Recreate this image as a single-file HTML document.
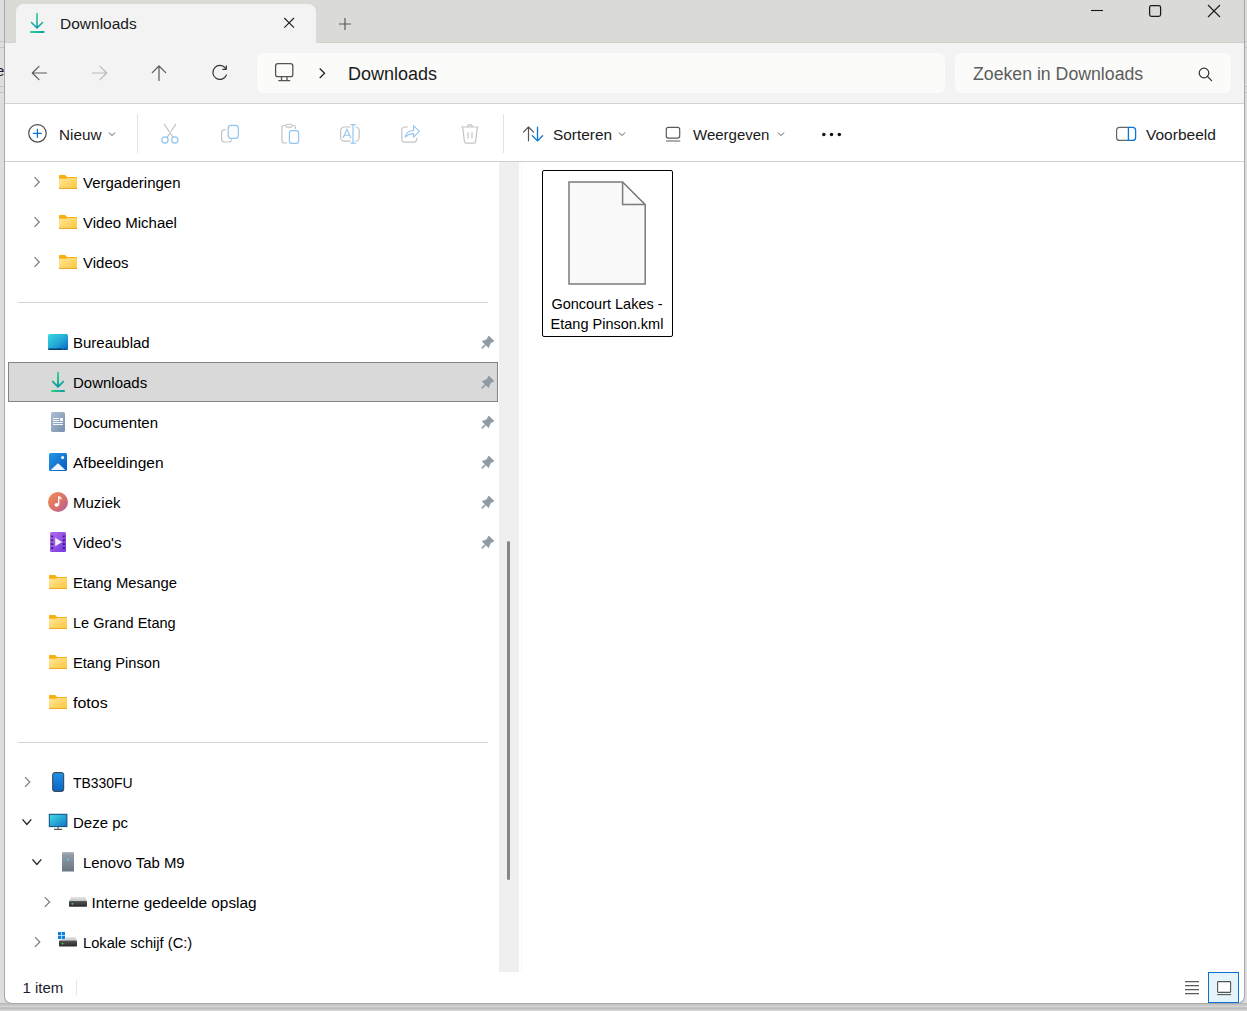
<!DOCTYPE html>
<html><head><meta charset="utf-8">
<style>
*{margin:0;padding:0;box-sizing:border-box}
html,body{width:1247px;height:1011px;overflow:hidden;background:#d4d4d4;font-family:"Liberation Sans",sans-serif;color:#1a1a1a}
.a{position:absolute}
.t{position:absolute;font-size:15px;line-height:20px;white-space:nowrap}
svg{position:absolute;overflow:visible}
</style></head><body>
<!-- left strip (another window behind) -->
<div class="a" style="left:0;top:0;width:4px;height:1011px;background:#dedede"></div>
<div class="a" style="left:0;top:41px;width:4px;height:1px;background:#c4c4c4"></div>
<div class="a" style="left:0;top:47px;width:4px;height:1px;background:#c4c4c4"></div>
<div class="a" style="left:0;top:86px;width:4px;height:1px;background:#c4c4c4"></div>
<div class="a" style="left:0;top:92px;width:4px;height:1px;background:#c4c4c4"></div>
<div class="t" style="left:-4px;top:61px;font-size:15px;color:#1a1a2a">e</div>
<!-- right strip -->
<div class="a" style="left:1245px;top:0;width:2px;height:1011px;background:#dcdcdc"></div>
<div class="a" style="left:1245px;top:41px;width:2px;height:1px;background:#c4c4c4"></div>
<div class="a" style="left:1245px;top:47px;width:2px;height:1px;background:#c4c4c4"></div>
<div class="a" style="left:1245px;top:86px;width:2px;height:1px;background:#c4c4c4"></div>
<div class="a" style="left:1245px;top:92px;width:2px;height:1px;background:#c4c4c4"></div>
<!-- bottom strip -->
<div class="a" style="left:0;top:1003px;width:1247px;height:8px;background:linear-gradient(#b4b4b4 0px,#c6c6c6 2px,#d2d2d2 3.5px,#c4c4c4 4.5px,#bdbdbd 5.5px,#d4d4d4 7px,#d8d8d8 8px)"></div>

<!-- window -->
<div id="win" class="a" style="left:4px;top:0;width:1241px;height:1004px;border:1px solid #a8a8a8;border-top:none;border-radius:0 0 8px 8px;background:#fff;overflow:hidden">
</div>

<!-- title bar -->
<div class="a" style="left:5px;top:0;width:1239px;height:43px;background:#dadbd7"></div>
<!-- row 2 bg -->
<div class="a" style="left:5px;top:43px;width:1239px;height:60px;background:#f3f3f3"></div>
<div class="a" style="left:316px;top:0;width:928px;height:43px;background:#dadbd7;border-bottom-left-radius:5px;border-bottom:1px solid #cfcfcc"></div>
<!-- tab -->
<div class="a" style="left:16px;top:3.5px;width:300px;height:40.5px;background:#f3f3f3;border-radius:8px 8px 0 0"></div>
<div class="a" style="left:5px;top:0;width:11px;height:43px;background:#dadbd7;border-bottom-right-radius:5px;border-bottom:1px solid #cfcfcc"></div>

<div class="t" style="left:60px;top:14px;font-size:15.5px">Downloads</div>

<!-- address box -->
<div class="a" style="left:257px;top:53px;width:688px;height:40px;background:#fbfbfa;border-radius:6px"></div>
<div class="t" style="left:348px;top:64px;font-size:18px">Downloads</div>
<!-- search box -->
<div class="a" style="left:955px;top:53px;width:276px;height:40px;background:#fbfbfa;border-radius:6px"></div>
<div class="t" style="left:973px;top:64px;font-size:18px;color:#5d5d5d;transform:scaleX(0.983);transform-origin:0 0">Zoeken in Downloads</div>

<!-- lines -->
<div class="a" style="left:5px;top:103px;width:1239px;height:1px;background:#d3d3d1"></div>
<div class="a" style="left:5px;top:161px;width:1239px;height:1px;background:#d0d0ce"></div>


<!-- ICONS TOP -->
<svg style="left:0;top:0" width="1247" height="110">
 <defs>
  <linearGradient id="gdl" x1="0" y1="0" x2="0" y2="1"><stop offset="0" stop-color="#2fd18a"/><stop offset="1" stop-color="#0c9ea6"/></linearGradient>
  <linearGradient id="gdl2" x1="0" y1="0" x2="1" y2="0"><stop offset="0" stop-color="#2fd18a"/><stop offset="1" stop-color="#0c9ea6"/></linearGradient>
 </defs>
 <!-- tab download icon -->
 <path d="M37 13.5V28M31.5 22.5L37 28L42.5 22.5" fill="none" stroke="url(#gdl)" stroke-width="1.6" stroke-linecap="round" stroke-linejoin="round"/>
 <rect x="30" y="31" width="14.5" height="2" rx="0.8" fill="url(#gdl2)"/>
 <!-- tab close -->
 <path d="M284.3 18L294 27.7M294 18L284.3 27.7" stroke="#1f1f1f" stroke-width="1.1"/>
 <!-- plus -->
 <path d="M345 18V30M339 24H351" stroke="#5a5a5a" stroke-width="1.2"/>
 <!-- window controls -->
 <path d="M1091 10.5H1103" stroke="#1a1a1a" stroke-width="1.1"/>
 <rect x="1149.6" y="5.6" width="11" height="10.8" rx="1.8" fill="none" stroke="#1a1a1a" stroke-width="1.25"/>
 <path d="M1208 5L1220 17M1220 5L1208 17" stroke="#1a1a1a" stroke-width="1.1"/>
 <!-- back -->
 <path d="M46.5 73H32.5M39 66.3L32.3 73L39 79.7" fill="none" stroke="#5c5c5c" stroke-width="1.2" stroke-linecap="round" stroke-linejoin="round"/>
 <!-- forward -->
 <path d="M92.5 73H106.5M100 66.3L106.7 73L100 79.7" fill="none" stroke="#b9b9b9" stroke-width="1.2" stroke-linecap="round" stroke-linejoin="round"/>
 <!-- up -->
 <path d="M159 80.5V66M152.3 72.7L159 66L165.7 72.7" fill="none" stroke="#5a5a5a" stroke-width="1.2" stroke-linecap="round" stroke-linejoin="round"/>
 <!-- refresh -->
 <path d="M225.6 68.4A7 7 0 1 0 226.4 75" fill="none" stroke="#333" stroke-width="1.2" stroke-linecap="round"/>
 <path d="M226.3 65.8V69.3H222.8" fill="none" stroke="#333" stroke-width="1.2" stroke-linecap="round" stroke-linejoin="round"/>
 <!-- monitor -->
 <rect x="275.6" y="63.6" width="17.2" height="13" rx="2.2" fill="none" stroke="#555" stroke-width="1.3"/>
 <path d="M281.5 77V80M287 77V80M278.3 80.7H290.2" fill="none" stroke="#555" stroke-width="1.3"/>
 <!-- breadcrumb chevron -->
 <path d="M319.7 68.5L324.6 73.3L319.7 78" fill="none" stroke="#1f1f1f" stroke-width="1.2"/>
 <!-- search -->
 <circle cx="1204" cy="73" r="4.8" fill="none" stroke="#333" stroke-width="1.2"/>
 <path d="M1207.4 76.4L1211.6 80.6" stroke="#333" stroke-width="1.3" stroke-linecap="round"/>
</svg>

<!-- command bar text -->
<div class="t" style="left:59px;top:125px;font-size:15.3px">Nieuw</div>
<div class="t" style="left:553px;top:125px;font-size:15.4px">Sorteren</div>
<div class="t" style="left:693px;top:125px">Weergeven</div>
<div class="t" style="left:1146px;top:125px;font-size:15.5px">Voorbeeld</div>
<div class="a" style="left:137px;top:114px;width:1px;height:39px;background:#e3e3e3"></div>
<div class="a" style="left:503px;top:114px;width:1px;height:39px;background:#e3e3e3"></div>


<!-- ICONS CMD -->
<svg style="left:0;top:104px" width="1247" height="57" viewBox="0 104 1247 57">
 <circle cx="37.45" cy="133.35" r="8.75" fill="none" stroke="#4a4a4a" stroke-width="1.2"/>
 <path d="M37.4 129.4V137.3M33.4 133.4H41.3" stroke="#0a72d4" stroke-width="1.3" stroke-linecap="round"/>
 <path d="M109 132.6L112 135.6L115 132.6" fill="none" stroke="#555" stroke-width="1"/>
 <!-- scissors -->
 <path d="M164.3 124.3L173 137.2M175.7 124.3L171.2 131.3M169.4 134.2L167 137.4" fill="none" stroke="#bcbcbc" stroke-width="1.1" stroke-linecap="round"/>
 <circle cx="165" cy="140" r="3.1" fill="none" stroke="#93c5ee" stroke-width="1.2"/>
 <circle cx="174.8" cy="140" r="3.1" fill="none" stroke="#93c5ee" stroke-width="1.2"/>
 <!-- copy -->
 <path d="M225.6 129.6H224.6A3 3 0 0 0 221.6 132.6V139A3 3 0 0 0 224.6 142H228.6A3 3 0 0 0 231.6 139.5" fill="none" stroke="#c4c4c4" stroke-width="1.2"/>
 <rect x="228.2" y="125.4" width="10.2" height="13" rx="2.8" fill="#fbfbfb" stroke="#93c5ee" stroke-width="1.2"/>
 <!-- paste -->
 <path d="M295.5 129V127.5A2 2 0 0 0 293.5 125.5H284A2 2 0 0 0 282 127.5V141A2 2 0 0 0 284 143H287" fill="none" stroke="#c4c4c4" stroke-width="1.2"/>
 <rect x="285.8" y="124.3" width="6.5" height="2.8" rx="1.3" fill="#fff" stroke="#c4c4c4" stroke-width="1.1"/>
 <rect x="289.4" y="130.6" width="9.2" height="12.8" rx="2.4" fill="#fff" stroke="#93c5ee" stroke-width="1.2"/>
 <!-- rename -->
 <path d="M350.5 127H344.2A3.6 3.6 0 0 0 340.6 130.6V137.6A3.6 3.6 0 0 0 344.2 141.2H350.5M355.6 127H355.6A3.6 3.6 0 0 1 359.2 130.6V137.6A3.6 3.6 0 0 1 355.6 141.2" fill="none" stroke="#c4c4c4" stroke-width="1.2"/>
 <path d="M343 138L347 129.3L351 138M344.3 135.2H349.7" fill="none" stroke="#93c5ee" stroke-width="1.1"/>
 <path d="M353 124.6V143.2M350.6 124.6H355.8M350.6 143.2H355.8" fill="none" stroke="#93c5ee" stroke-width="1.2"/>
 <!-- share -->
 <path d="M407.8 127H405A3.2 3.2 0 0 0 401.8 130.2V139A3.2 3.2 0 0 0 405 142.2H413.6A3.2 3.2 0 0 0 416.8 139V138" fill="none" stroke="#c4c4c4" stroke-width="1.2"/>
 <path d="M405.3 137.2C406 132.5 409 130.5 413.6 130.5V125.6L419.3 131.4L413.6 137.2V133.6C410 133.6 407.5 134.8 405.3 137.2Z" fill="none" stroke="#93c5ee" stroke-width="1.1" stroke-linejoin="round"/>
 <!-- delete -->
 <path d="M461 127H478.6M467.6 127A2.4 2.4 0 0 1 472.4 127" fill="none" stroke="#c4c4c4" stroke-width="1.2"/>
 <path d="M462.7 127.4L464.4 141.4A2 2 0 0 0 466.4 143.2H473.6A2 2 0 0 0 475.6 141.4L477.3 127.4" fill="none" stroke="#c4c4c4" stroke-width="1.2"/>
 <path d="M468 132.2V138.6M472 132.2V138.6" stroke="#c4c4c4" stroke-width="1.2"/>
 <!-- sort -->
 <path d="M528.5 140.8V127M523.4 132.1L528.5 127L533.6 132.1" fill="none" stroke="#555" stroke-width="1.2" stroke-linecap="round" stroke-linejoin="round"/>
 <path d="M537.5 127.2V140.8M532.4 135.8L537.5 140.9L542.6 135.8" fill="none" stroke="#0a74d6" stroke-width="1.3" stroke-linecap="round" stroke-linejoin="round"/>
 <path d="M619 132.6L622 135.6L625 132.6" fill="none" stroke="#555" stroke-width="1"/>
 <!-- view -->
 <rect x="666.3" y="127.4" width="13.4" height="10.7" rx="2" fill="none" stroke="#5a5a5a" stroke-width="1.2"/>
 <path d="M666 141H680.2" stroke="#777" stroke-width="1.2"/>
 <path d="M778 132.6L781 135.6L784 132.6" fill="none" stroke="#555" stroke-width="1"/>
 <!-- dots -->
 <circle cx="823.8" cy="134.4" r="1.75" fill="#111"/>
 <circle cx="831.5" cy="134.4" r="1.75" fill="#111"/>
 <circle cx="839.3" cy="134.4" r="1.75" fill="#111"/>
 <!-- preview -->
 <path d="M1128.4 127.3H1119.6A3 3 0 0 0 1116.6 130.3V137.4A3 3 0 0 0 1119.6 140.4H1128.4" fill="none" stroke="#666" stroke-width="1.2"/>
 <path d="M1128.4 127.3H1132.6A3 3 0 0 1 1135.6 130.3V137.4A3 3 0 0 1 1132.6 140.4H1128.4Z" fill="none" stroke="#0a74d6" stroke-width="1.3"/>
</svg>

<!-- nav pane -->
<div class="t" style="left:83px;top:173px;font-size:15.4px;color:#000;transform:scaleX(0.974);transform-origin:0 0">Vergaderingen</div>
<div class="t" style="left:83px;top:213px;font-size:15.4px;color:#000;transform:scaleX(0.974);transform-origin:0 0">Video Michael</div>
<div class="t" style="left:83px;top:253px;font-size:15.4px;color:#000;transform:scaleX(0.974);transform-origin:0 0">Videos</div>
<div class="a" style="left:18px;top:302px;width:470px;height:1px;background:#d6d6d6"></div>
<div class="a" style="left:8px;top:362px;width:490px;height:40px;background:#d9d9d9;border:1px solid #838383"></div>
<div class="t" style="left:73px;top:333px;font-size:15.4px;color:#000;transform:scaleX(0.974);transform-origin:0 0">Bureaublad</div>
<div class="t" style="left:73px;top:373px;font-size:15.4px;color:#000;transform:scaleX(0.974);transform-origin:0 0">Downloads</div>
<div class="t" style="left:73px;top:413px;font-size:15.4px;color:#000;transform:scaleX(0.974);transform-origin:0 0">Documenten</div>
<div class="t" style="left:73px;top:453px;font-size:15.4px;color:#000;transform:scaleX(1.0081);transform-origin:0 0">Afbeeldingen</div>
<div class="t" style="left:73px;top:493px;font-size:15.4px;color:#000;transform:scaleX(0.974);transform-origin:0 0">Muziek</div>
<div class="t" style="left:73px;top:533px;font-size:15.4px;color:#000;transform:scaleX(0.974);transform-origin:0 0">Video's</div>
<div class="t" style="left:73px;top:573px;font-size:15.4px;color:#000;transform:scaleX(0.9643);transform-origin:0 0">Etang Mesange</div>
<div class="t" style="left:73px;top:613px;font-size:15.4px;color:#000;transform:scaleX(0.9448);transform-origin:0 0">Le Grand Etang</div>
<div class="t" style="left:73px;top:653px;font-size:15.4px;color:#000;transform:scaleX(0.9516);transform-origin:0 0">Etang Pinson</div>
<div class="t" style="left:73px;top:693px;font-size:15.4px;color:#000;transform:scaleX(1.0373);transform-origin:0 0">fotos</div>
<div class="a" style="left:18px;top:742px;width:470px;height:1px;background:#d6d6d6"></div>
<div class="t" style="left:73px;top:773px;font-size:15.4px;color:#000;transform:scaleX(0.9058);transform-origin:0 0">TB330FU</div>
<div class="t" style="left:73px;top:813px;font-size:15.4px;color:#000;transform:scaleX(0.974);transform-origin:0 0">Deze pc</div>
<div class="t" style="left:82.5px;top:853px;font-size:15.4px;color:#000;transform:scaleX(0.968);transform-origin:0 0">Lenovo Tab M9</div>
<div class="t" style="left:91.5px;top:893px;font-size:15.4px;color:#000;transform:scaleX(1.0);transform-origin:0 0">Interne gedeelde opslag</div>
<div class="t" style="left:82.5px;top:933px;font-size:15.4px;color:#000;transform:scaleX(0.9526);transform-origin:0 0">Lokale schijf (C:)</div>

<!-- scrollbar -->
<div class="a" style="left:499px;top:162px;width:20px;height:810px;background:#efefef"></div>
<div class="a" style="left:507px;top:541px;width:3px;height:339px;background:#868686;border-radius:2px"></div>
<div class="a" style="left:521px;top:162px;width:1px;height:810px;background:#f7f7f7"></div>

<!-- file item -->
<div class="a" style="left:542px;top:170px;width:131px;height:167px;border:1.5px solid #000;border-radius:2px"></div>
<div class="t" style="left:547px;top:294px;font-size:14.5px;width:120px;text-align:center;color:#000">Goncourt Lakes -</div>
<div class="t" style="left:547px;top:314px;font-size:14.5px;width:120px;text-align:center;color:#000">Etang Pinson.kml</div>

<!-- status -->
<div class="t" style="left:22.5px;top:978px;color:#1b1b2b">1 item</div>
<div class="a" style="left:76px;top:980px;width:1px;height:15px;background:#e6e6e6"></div>
<div class="a" style="left:1208px;top:972px;width:31px;height:31px;background:#e5f3fb;border:1.3px solid #0a6fd1"></div>

<!-- NAV ICONS -->
<svg style="left:0;top:0" width="1247" height="1011">
<defs>
 <linearGradient id="gfold" x1="0" y1="0" x2="1" y2="1"><stop offset="0" stop-color="#fee69a"/><stop offset="1" stop-color="#fcc63a"/></linearGradient>
 <symbol id="fold" overflow="visible">
  <path d="M0.8 0H6.2L8 2H17.2A0.8 0.8 0 0 1 18 2.8V5H0V0.8A0.8 0.8 0 0 1 0.8 0Z" fill="#f5b20f"/>
  <path d="M0 3.8H7L8 3H17.2A0.8 0.8 0 0 1 18 3.8V13.2A0.8 0.8 0 0 1 17.2 14H0.8A0.8 0.8 0 0 1 0 13.2Z" fill="url(#gfold)"/>
  <rect x="0" y="13" width="18" height="1" rx="0.5" fill="#e9a92a"/>
 </symbol>
 <symbol id="pin" overflow="visible">
  <path d="M488.8 336.1L493.9 341.1L490.3 343L488.5 347.6L482.3 341.4L486.9 339.5Z" fill="#8f9aa1" stroke="#8f9aa1" stroke-width="0.8" stroke-linejoin="round"/>
  <path d="M485.3 344.8L482.2 347.9" stroke="#8f9aa1" stroke-width="1.5" stroke-linecap="round"/>
 </symbol>
 <linearGradient id="gdesk" x1="0" y1="0" x2="1" y2="1"><stop offset="0" stop-color="#38dbe2"/><stop offset="0.55" stop-color="#22a6d6"/><stop offset="1" stop-color="#0a62c8"/></linearGradient>
 <linearGradient id="gdoc" x1="0" y1="0" x2="1" y2="1"><stop offset="0" stop-color="#aebfd2"/><stop offset="1" stop-color="#7590ae"/></linearGradient>
 <linearGradient id="gpic" x1="0" y1="0" x2="1" y2="1"><stop offset="0" stop-color="#2499e6"/><stop offset="1" stop-color="#0858c0"/></linearGradient>
 <linearGradient id="gmus" x1="0" y1="0" x2="1" y2="1"><stop offset="0" stop-color="#f08c52"/><stop offset="0.6" stop-color="#d8706e"/><stop offset="1" stop-color="#a85aa8"/></linearGradient>
 <linearGradient id="gvid" x1="0" y1="0" x2="1" y2="1"><stop offset="0" stop-color="#b36ef0"/><stop offset="1" stop-color="#7436e0"/></linearGradient>
 <linearGradient id="gphone" x1="0" y1="0" x2="0" y2="1"><stop offset="0" stop-color="#1f95ea"/><stop offset="1" stop-color="#0a62c6"/></linearGradient>
 <linearGradient id="gmon" x1="0" y1="0" x2="1" y2="1"><stop offset="0" stop-color="#40e0e8"/><stop offset="1" stop-color="#1270c6"/></linearGradient>
 <linearGradient id="gtow" x1="0" y1="0" x2="0" y2="1"><stop offset="0" stop-color="#97a2ad"/><stop offset="1" stop-color="#6b7580"/></linearGradient>
 <linearGradient id="gdrv" x1="0" y1="0" x2="0" y2="1"><stop offset="0" stop-color="#555"/><stop offset="1" stop-color="#2a2a2a"/></linearGradient>
 <linearGradient id="gdrvt" x1="0" y1="0" x2="0" y2="1"><stop offset="0" stop-color="#e6e6e6"/><stop offset="1" stop-color="#c4c4c4"/></linearGradient>
 <linearGradient id="gnd" x1="0" y1="0" x2="0" y2="1"><stop offset="0" stop-color="#2fd280"/><stop offset="1" stop-color="#0b9aa4"/></linearGradient>
 <linearGradient id="gnd2" x1="0" y1="0" x2="1" y2="0" gradientUnits="objectBoundingBox"><stop offset="0" stop-color="#2fd280"/><stop offset="1" stop-color="#0b9aa4"/></linearGradient>
</defs>

<path d="M34.5 177.2L39.3 182L34.5 186.8" fill="none" stroke="#7a7a7a" stroke-width="1.2"/>
<use href="#fold" x="59" y="175"/>
<path d="M34.5 217.2L39.3 222L34.5 226.8" fill="none" stroke="#7a7a7a" stroke-width="1.2"/>
<use href="#fold" x="59" y="215"/>
<path d="M34.5 257.2L39.3 262L34.5 266.8" fill="none" stroke="#7a7a7a" stroke-width="1.2"/>
<use href="#fold" x="59" y="255"/>
<path d="M49.5 334H66.5A1.5 1.5 0 0 1 68 335.5V348.5A1.5 1.5 0 0 1 66.5 350H49.5A1.5 1.5 0 0 1 48 348.5V335.5A1.5 1.5 0 0 1 49.5 334Z" fill="url(#gdesk)"/>
<path d="M49 348.6H62.5V350H49.5A1.4 1.4 0 0 1 48 348.6Z" fill="#0a3a66"/><circle cx="64.3" cy="349.3" r="0.8" fill="#0a3a66"/><circle cx="66.5" cy="349.3" r="0.8" fill="#0a3a66"/>
<path d="M58 372.8V386.6M52.8 381.6L58 386.8L63.2 381.6" fill="none" stroke="url(#gnd)" stroke-width="1.9" stroke-linecap="round" stroke-linejoin="round"/>
<rect x="51" y="390" width="14" height="2" rx="0.9" fill="url(#gnd2)"/>
<rect x="51" y="412" width="14" height="20" rx="1.6" fill="url(#gdoc)"/>
<rect x="53" y="418" width="6" height="1" fill="#f6f9fc"/><rect x="53" y="420" width="6" height="1" fill="#f6f9fc"/><rect x="53" y="422" width="10" height="1" fill="#f6f9fc"/><rect x="53" y="424" width="10" height="1" fill="#f6f9fc"/><rect x="60" y="418" width="3" height="3" fill="#f6f9fc"/>
<rect x="49" y="453" width="18" height="18" rx="1.6" fill="url(#gpic)"/>
<path d="M50.6 470L58 463.3L65.4 470Z" fill="#eef5fc"/><circle cx="62.6" cy="457.6" r="1.5" fill="#fff"/>
<circle cx="58" cy="502" r="10" fill="url(#gmus)"/>
<path d="M58.7 496.2V504.6" stroke="#fff" stroke-width="1.3"/><ellipse cx="56.7" cy="504.8" rx="2.2" ry="1.9" fill="#fff"/><path d="M58.7 496L61.4 497.6V499.4L58.7 498" fill="#fff"/>
<rect x="50" y="532" width="16" height="20" rx="1.5" fill="url(#gvid)"/>
<rect x="51.2" y="535.5" width="2" height="1.8" fill="#3a2068"/><rect x="62.8" y="535.5" width="2" height="1.8" fill="#3a2068"/>
<rect x="51.2" y="539.3" width="2" height="1.8" fill="#3a2068"/><rect x="62.8" y="539.3" width="2" height="1.8" fill="#3a2068"/>
<rect x="51.2" y="543.2" width="2" height="1.8" fill="#3a2068"/><rect x="62.8" y="543.2" width="2" height="1.8" fill="#3a2068"/>
<rect x="51.2" y="547.2" width="2" height="1.8" fill="#3a2068"/><rect x="62.8" y="547.2" width="2" height="1.8" fill="#3a2068"/>
<path d="M55.2 537.8L62.2 542L55.2 546.2Z" fill="#f3effa"/>
<use href="#fold" x="49" y="575"/>
<use href="#fold" x="49" y="615"/>
<use href="#fold" x="49" y="655"/>
<use href="#fold" x="49" y="695"/>
<use href="#pin" x="0" y="0"/>
<use href="#pin" x="0" y="40"/>
<use href="#pin" x="0" y="80"/>
<use href="#pin" x="0" y="120"/>
<use href="#pin" x="0" y="160"/>
<use href="#pin" x="0" y="200"/>
<rect x="52.7" y="772.6" width="11" height="18.8" rx="2" fill="url(#gphone)" stroke="#3a3a3a" stroke-width="1"/>
<path d="M25.0 777.2L29.8 782L25.0 786.8" fill="none" stroke="#7a7a7a" stroke-width="1.2"/>
<path d="M22.5 819.4L26.9 824.4L31.3 819.4" fill="none" stroke="#262626" stroke-width="1.4"/>
<rect x="49.3" y="814.3" width="17.6" height="12.3" fill="url(#gmon)" stroke="#0d4a78" stroke-width="1"/>
<path d="M58.1 826.8V829" stroke="#777" stroke-width="1.4"/><path d="M54 829.4H62.2" stroke="#555" stroke-width="1.2"/>
<path d="M32.5 859.4L36.9 864.4L41.3 859.4" fill="none" stroke="#262626" stroke-width="1.4"/>
<path d="M63 852H73L74 853.2V871.6H62V853.2Z" fill="url(#gtow)"/><path d="M63 852H73L74 853.5H62Z" fill="#a9b3bc"/><circle cx="67.9" cy="859.6" r="1.1" fill="#3fd8f0"/>
<path d="M44.8 897.2L49.599999999999994 902L44.8 906.8" fill="none" stroke="#7a7a7a" stroke-width="1.2"/>
<path d="M71 897H85.2L87 901H69Z" fill="url(#gdrvt)"/><rect x="69" y="901" width="18" height="5.8" rx="0.8" fill="url(#gdrv)"/><circle cx="72.5" cy="903.8" r="0.9" fill="#3ce04a"/>
<path d="M35.0 937.2L39.8 942L35.0 946.8" fill="none" stroke="#7a7a7a" stroke-width="1.2"/>
<rect x="58" y="932" width="3.2" height="3.2" fill="#1080e0"/><rect x="61.8" y="932" width="3.2" height="3.2" fill="#1080e0"/><rect x="58" y="935.8" width="3.2" height="3.2" fill="#1080e0"/><rect x="61.8" y="935.8" width="3.2" height="3.2" fill="#1080e0"/>
<path d="M65.6 937H75.4L77 940.6H59.5L61 939.2H65.6Z" fill="url(#gdrvt)"/><rect x="59" y="940.6" width="18" height="5.9" rx="0.8" fill="url(#gdrv)"/><circle cx="62.5" cy="943.6" r="0.9" fill="#3ce04a"/>
<path d="M569 182H622.6L645.2 204.6V284H569Z" fill="#f9f9f9" stroke="#7b7b7b" stroke-width="1.5" stroke-linejoin="miter"/>
<path d="M622.6 182V204.6H645.2" fill="none" stroke="#7b7b7b" stroke-width="1.5"/>
<path d="M1185 981.6H1199M1185 985.6H1199M1185 989.6H1199M1185 993.6H1199" stroke="#5a5a5a" stroke-width="1.1"/>
<rect x="1217.6" y="981.6" width="13" height="10.8" rx="0.6" fill="#fdfdfd" stroke="#555" stroke-width="1.1"/><path d="M1217.2 994.6H1231.2" stroke="#555" stroke-width="1.1"/>
</svg>
</body></html>
